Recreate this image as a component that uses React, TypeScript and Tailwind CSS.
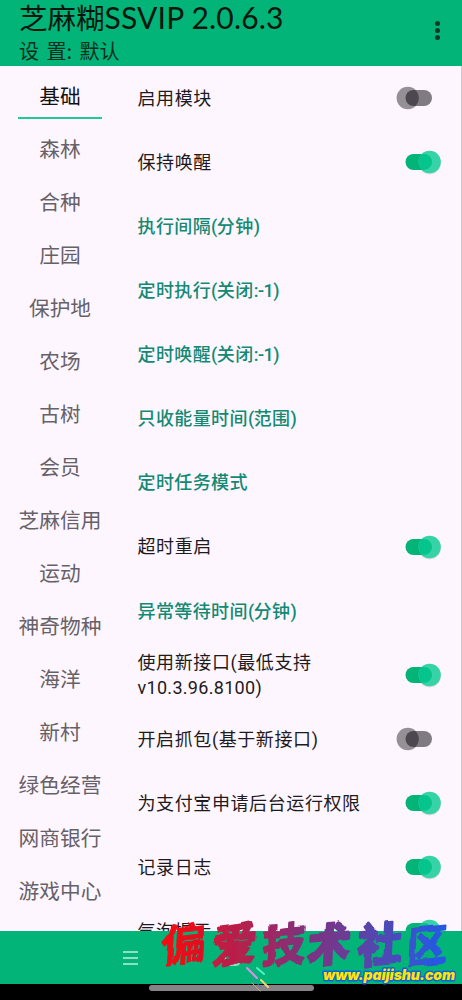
import clsx from "clsx";

type Setting = {
  label: string;
  sub?: string;
  kind: "switch" | "link";
  on?: boolean;
};

const tabs = [
  "基础",
  "森林",
  "合种",
  "庄园",
  "保护地",
  "农场",
  "古树",
  "会员",
  "芝麻信用",
  "运动",
  "神奇物种",
  "海洋",
  "新村",
  "绿色经营",
  "网商银行",
  "游戏中心",
];

const settings: Setting[] = [
  { label: "启用模块", kind: "switch", on: false },
  { label: "保持唤醒", kind: "switch", on: true },
  { label: "执行间隔(分钟)", kind: "link" },
  { label: "定时执行(关闭:-1)", kind: "link" },
  { label: "定时唤醒(关闭:-1)", kind: "link" },
  { label: "只收能量时间(范围)", kind: "link" },
  { label: "定时任务模式", kind: "link" },
  { label: "超时重启", kind: "switch", on: true },
  { label: "异常等待时间(分钟)", kind: "link" },
  { label: "使用新接口(最低支持", sub: "v10.3.96.8100)", kind: "switch", on: true },
  { label: "开启抓包(基于新接口)", kind: "switch", on: false },
  { label: "为支付宝申请后台运行权限", kind: "switch", on: true },
  { label: "记录日志", kind: "switch", on: true },
  { label: "气泡提示", kind: "switch", on: true },
];

// each brush character gets its own place and width
const brushChars = [
  { char: "偏", x: 0, y: 46, sx: 1.04, stroke: 0.8, from: "#f50810", to: "#df0e24" },
  { char: "爱", x: 52, y: 46, sx: 1, stroke: 2.4, from: "#c81a3e", to: "#aa2456" },
  { char: "技", x: 102, y: 46, sx: 0.96, stroke: 2.4, from: "#a5265f", to: "#80317c" },
  { char: "术", x: 147, y: 46, sx: 0.96, stroke: 3, from: "#7c3280", to: "#6a3d98" },
  { char: "社", x: 197, y: 46, sx: 1, stroke: 3, from: "#5e42a4", to: "#464cc0" },
  { char: "区", x: 246, y: 47, sx: 0.92, stroke: 2, from: "#3a53cc", to: "#2459e8" },
];

function Switch({ on }: { on?: boolean }) {
  return (
    <svg width="54" height="32" viewBox="0 0 54 32" className="shrink-0">
      <rect x="14.5" y="8" width="26.5" height="16" rx="8" fill={on ? "#02b478" : "#807a81"} />
      {on ? (
        <>
          <circle cx="38.6" cy="17.2" r="11.2" fill="#000" opacity="0.13" />
          <circle cx="38.6" cy="16" r="11.2" fill="#35d3a6" />
          <path d="M31 7.9h2a8 8 0 0 1 0 16h-2a11.2 11.2 0 0 1 0-16z" fill="#05c48c" />
        </>
      ) : (
        <>
          <circle cx="16.8" cy="16" r="11.2" fill="#959096" />
          <path d="M22.5 8a8 8 0 0 0 0 16h2a11.2 11.2 0 0 0 0-16z" fill="#4d484f" />
        </>
      )}
    </svg>
  );
}

function SettingRow({ label, sub, kind, on }: Setting) {
  return (
    <div className="flex h-[64.1px] shrink-0 items-center justify-between pr-[16.5px]">
      <span
        className={clsx(
          "pt-[0.5px] font-[Roboto,'Noto_Sans_CJK_SC',sans-serif] text-[18px] leading-[25px] tracking-[0.6px] whitespace-nowrap",
          kind === "link" ? "font-medium text-[#128a73]" : "text-[#1d1a20]"
        )}
      >
        {kind === "link"
          ? label.split(/([(:\-1)]+)/).map((part, i) => (
              <span key={i} className={i % 2 ? "tracking-[-0.5px]" : "tracking-[0.4px]"}>
                {part}
              </span>
            ))
          : label}
        {sub && <span className="block tracking-[0.3px]">{sub}</span>}
      </span>
      {kind === "switch" && <Switch on={on} />}
    </div>
  );
}

function Watermark() {
  return (
    <div className="absolute top-[917px] left-[160px] w-[302px]">
      <svg width="302" height="83" viewBox="0 0 302 83" className="block overflow-visible">
        <defs>
          {brushChars.map(({ char, from, to }, i) => (
            <linearGradient key={char} id={`ink${i}`} x1="0" y1="0" x2="1" y2="0">
              <stop offset="0" stopColor={from} />
              <stop offset="1" stopColor={to} />
            </linearGradient>
          ))}
          <filter id="rough" x="-5%" y="-10%" width="110%" height="120%">
            <feTurbulence type="fractalNoise" baseFrequency="0.07" numOctaves="1" seed="4" result="n" />
            <feDisplacementMap
              in="SourceGraphic"
              in2="n"
              scale="5"
              xChannelSelector="R"
              yChannelSelector="G"
            />
          </filter>
        </defs>
        <g
          strokeLinejoin="round"
          fontSize="44"
          fontWeight="700"
          fontFamily='"Noto Sans CJK SC", sans-serif'
          filter="url(#rough)"
        >
          {brushChars.map(({ char, x, y, sx, stroke }, i) => (
            <text
              key={char}
              transform={`translate(${x} ${y}) skewY(-6) skewX(-3) scale(${sx} 1)`}
              fill={`url(#ink${i})`}
              stroke={`url(#ink${i})`}
              strokeWidth={stroke}
            >
              {char}
            </text>
          ))}
        </g>
        <g strokeLinecap="round" strokeWidth="2">
          <path d="M87 51l10 10" stroke="#e08de8" />
          <path d="M97 51l7 6" stroke="#52f0c2" />
          <path d="M101 63l7 7" stroke="#f2d875" />
          <path d="M91 61l10 9" stroke="#4f83bd" strokeWidth="1" />
          <path d="M92 66l8 8" stroke="#c9a58a" strokeWidth="1" />
        </g>
        <text
          x="163"
          y="63"
          textLength="132"
          lengthAdjust="spacingAndGlyphs"
          fontSize="14.5"
          fontWeight="900"
          fontStyle="italic"
          fontFamily='Inter, "Liberation Sans", sans-serif'
          fill="#ffe400"
          stroke="#1262d8"
          strokeWidth="3"
          strokeLinejoin="round"
          paintOrder="stroke"
        >
          www.paijishu.com
        </text>
      </svg>
    </div>
  );
}

export default function App() {
  return (
    <div className="relative flex h-[1000px] w-[462px] flex-col overflow-hidden bg-[#fef6ff] font-['Noto_Sans_CJK_SC',sans-serif]">
      <header className="flex h-[66px] shrink-0 items-start justify-between bg-[#02b478] pl-[19px]">
        <div>
          <h1 className="flex h-[34px] items-center text-[28.5px] leading-[34px] whitespace-nowrap text-[#04170f]">
            <span>芝麻糊</span>
            <span className="font-[Lato,sans-serif] text-[30px] tracking-[0.2px]">SSVIP 2.0.6.3</span>
          </h1>
          <p className="text-[20px] leading-[34px] text-[#062e20] [word-spacing:3px]">设 置: 默认</p>
        </div>
        <div className="mt-[21px] mr-[22.5px] flex flex-col gap-[2px]">
          <i className="size-[5px] rounded-full bg-[#053b29]" />
          <i className="size-[5px] rounded-full bg-[#053b29]" />
          <i className="size-[5px] rounded-full bg-[#053b29]" />
        </div>
      </header>

      <main className="flex h-[865px] shrink-0 overflow-hidden border-r border-[#d0c9d1]">
        <nav className="flex w-[120px] shrink-0 flex-col">
          {tabs.map((tab, i) => (
            <div key={tab} className="flex h-[53px] shrink-0 justify-center">
              <span
                className={clsx(
                  "flex items-center text-[20.7px] leading-none whitespace-nowrap",
                  i === 0
                    ? "w-[84px] justify-center border-b-2 border-[#20c997] pt-[8px] text-[#111]"
                    : "pt-[6px] text-[#666167]"
                )}
              >
                {tab}
              </span>
            </div>
          ))}
        </nav>
        <section className="flex flex-1 flex-col pl-[17.5px]">
          {settings.map((s) => (
            <SettingRow key={s.label} {...s} />
          ))}
        </section>
      </main>

      {/* system navigation bar */}
      <footer className="flex h-[53px] shrink-0 items-center bg-[#02b478] pl-[123px]">
        <div className="flex flex-col gap-1">
          <i className="h-[2px] w-[15px] bg-[#8fe0c2]" />
          <i className="h-[2px] w-[15px] bg-[#8fe0c2]" />
          <i className="h-[2px] w-[15px] bg-[#8fe0c2]" />
        </div>
        <div className="ml-[86px] h-4 w-[17px] rounded-[5px] border-2 border-[#8fe0c2]" />
        <i className="mb-[24px] ml-[28px] size-2 rounded-full bg-[#35c693]" />
      </footer>
      <div className="flex h-4 shrink-0 justify-center bg-black pt-[1px]">
        <div className="h-[6px] w-[165px] rounded-full bg-[#878487]" />
      </div>
      <Watermark />
    </div>
  );
}
